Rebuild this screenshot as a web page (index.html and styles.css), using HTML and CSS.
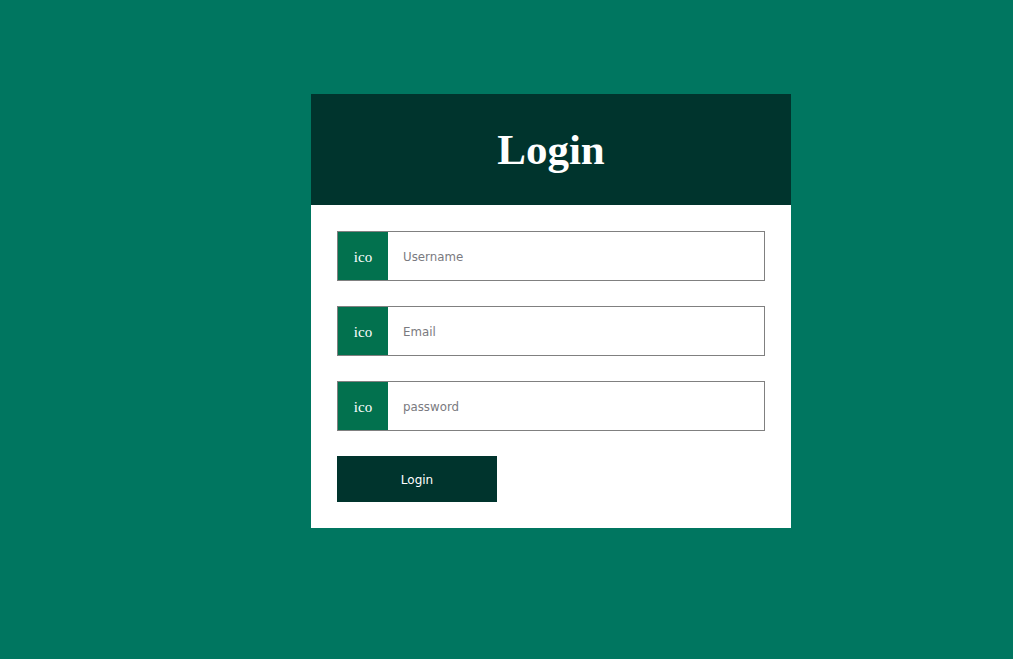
FILE: index.html
```html
<!DOCTYPE html>
<html>
<head>
<meta charset="utf-8">
<link rel="stylesheet" href="styles.css">
</head>
<body>
<div class="page">
  <div class="card">
    <div class="card-head"><h1 class="title">Login</h1></div>
    <form class="card-body">
      <div class="field"><span class="ico">ico</span><input class="inp" type="text" placeholder="Username"></div>
      <div class="field"><span class="ico">ico</span><input class="inp" type="email" placeholder="Email"></div>
      <div class="field"><span class="ico">ico</span><input class="inp" type="password" placeholder="password"></div>
      <button class="btn" type="button">Login</button>
    </form>
  </div>
</div>
</body>
</html>
```

FILE: styles.css
```css
html, body {
  margin: 0;
  padding: 0;
  height: 100%;
}
body {
  background: #007660;
}
.page {
  padding: 94px 0 0 311px;
}
.card {
  width: 480px;
  background: #ffffff;
}
.card-head {
  height: 111px;
  background: #00342d;
  display: flex;
  align-items: center;
  justify-content: center;
}
.title {
  margin: 0;
  color: #ffffff;
  font-family: "Liberation Serif", serif;
  font-weight: bold;
  font-size: 43px;
}
.card-body {
  padding: 26px;
  display: flex;
  flex-direction: column;
  gap: 25px;
  margin: 0;
}
.field {
  display: flex;
  height: 50px;
  border: 1px solid #808080;
  box-sizing: border-box;
}
.ico {
  width: 50px;
  padding-top: 2px;
  box-sizing: border-box;
  background: #02714e;
  color: #ffffff;
  font-family: "Liberation Serif", serif;
  font-size: 15px;
  font-weight: normal;
  display: flex;
  align-items: center;
  justify-content: center;
}
.inp {
  flex: 1;
  border: none;
  outline: none;
  padding: 2px 15px 0;
  font-family: "DejaVu Sans", sans-serif;
  font-size: 11.8px;
  color: #333;
}
.inp::placeholder {
  color: #7a7a80;
}
.btn {
  width: 160px;
  height: 46px;
  border: none;
  background: #00342d;
  color: #ffffff;
  font-family: "DejaVu Sans", sans-serif;
  font-size: 12px;
  padding: 2px 0 0;
}
```
